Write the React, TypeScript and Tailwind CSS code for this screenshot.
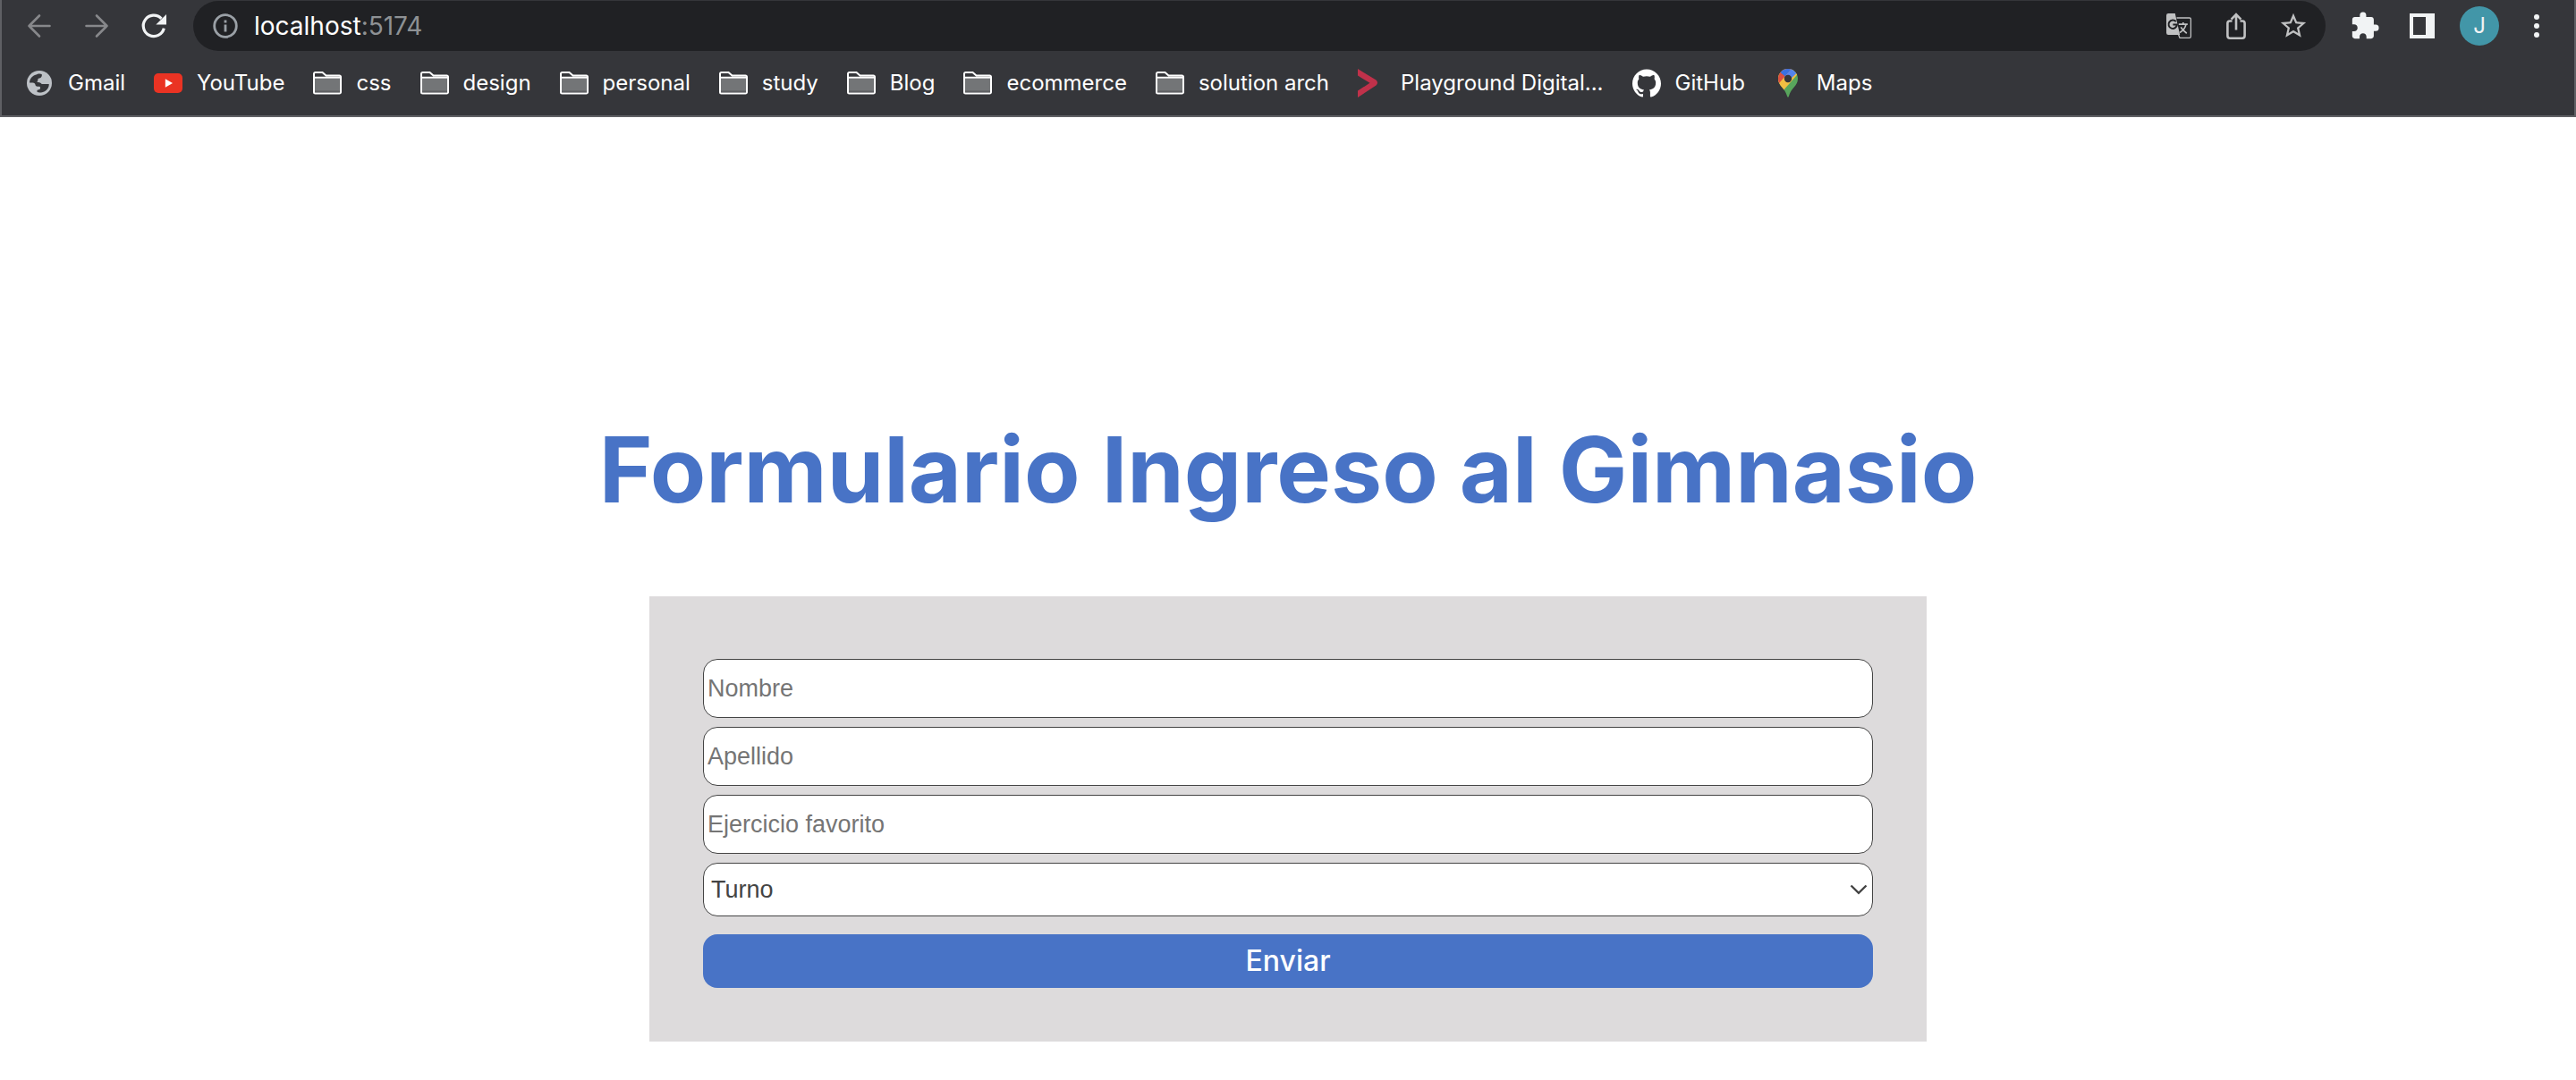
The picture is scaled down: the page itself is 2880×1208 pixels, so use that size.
import React from "react";
import { SiGithub } from "react-icons/si";
import { MdExtension, MdStarBorder } from "react-icons/md";

function ArrowIcon({ flip = false }: { flip?: boolean }) {
  return (
    <svg viewBox="0 0 32 32" className={flip ? "size-8 rotate-180" : "size-8"} fill="none" stroke="currentColor" strokeWidth="2.6" strokeLinecap="round" strokeLinejoin="round" aria-hidden="true">
      <path d="M27.500 16H4.500M16 4.500 4.500 16 16 27.500" />
    </svg>
  );
}

function ReloadIcon() {
  return (
    <svg viewBox="0 0 32 32" className="size-8" aria-hidden="true">
      <path d="M27.3 18.6A11.7 11.7 0 1 1 24.4 7.8" fill="none" stroke="currentColor" strokeWidth="3.2" />
      <path d="M30 3v11.6H18.4z" fill="currentColor" />
    </svg>
  );
}

function InfoIcon() {
  return (
    <svg viewBox="0 0 32 32" className="size-8" aria-hidden="true">
      <circle cx="16" cy="16" r="12.3" fill="none" stroke="currentColor" strokeWidth="2.8" />
      <path d="M14.6 14.6h2.8v8h-2.8zM14.6 9.6h2.8v2.8h-2.8z" fill="currentColor" />
    </svg>
  );
}

function GlobeIcon() {
  return (
    <svg viewBox="0 0 32 32" className="size-8" aria-hidden="true">
      <circle cx="16" cy="16" r="14" fill="#bdc1c6" />
      <path d="M5 15.500C5.300 11 8 8 12.500 6.600c1.500-1.300 4.500-1.500 6.200-.6.500 2-.3 3.600-1.700 4.200-1.600.3-2.600.6-2.700 1.800.3 1.300-.6 2-1 2.700 1.700.2 4.300.4 5.400 2.300h8c.2 1.800-.4 3.600-1.500 5.200-1.800 2.600-4.600 4-7.200 4.200-1.600.3-3 .2-4.200-.3-.7-1.200-.4-2.300.6-2.600 1.700 0 2.700-.7 2.600-1.900-.2-1.200.2-1.900-1-1.900-2 .1-4-.1-4.400-1.500-.2-1.700-1.200-2.700-3-2.700z" fill="#35363a" />
    </svg>
  );
}

function TranslateIcon() {
  return (
    <svg viewBox="0 0 32 32" className="size-8" aria-hidden="true">
      <path d="M4.200 2h7.600l1 4.800 4.400 19.200H4.200A2.200 2.200 0 0 1 2 23.800V4.200A2.200 2.200 0 0 1 4.200 2z" fill="currentColor" />
      <path d="M13.500 7h14.300a1.600 1.600 0 0 1 1.600 1.600v19.200a1.600 1.600 0 0 1-1.600 1.600H17l-1.500-4" fill="none" stroke="currentColor" strokeWidth="1.300" />
      <path d="M12.800 11.200a4.700 4.700 0 1 0 1.100 3.400H9.400" fill="none" stroke="#202124" strokeWidth="2" />
      <path d="M15.800 14.200h10M20.800 12v2.200M24 14.200c-.8 4-3.600 7.400-7 9.200M18.200 17.400c1.400 2.600 4 5 6.600 6.800" fill="none" stroke="currentColor" strokeWidth="1.700" />
    </svg>
  );
}

function ShareIcon() {
  return (
    <svg viewBox="0 0 32 32" className="size-8" fill="none" stroke="currentColor" strokeWidth="2.600" aria-hidden="true">
      <path d="M11.500 10.500H9A2.600 2.600 0 0 0 6.400 13.100v14A2.600 2.600 0 0 0 9 29.700h14a2.600 2.600 0 0 0 2.600-2.600v-14a2.600 2.600 0 0 0-2.600-2.600h-2.500" />
      <path d="M16 20.500V4M10.600 8.600 16 3.200l5.400 5.400" />
    </svg>
  );
}

function SidePanelIcon() {
  return (
    <svg viewBox="0 0 32 32" className="size-8" aria-hidden="true">
      <path fillRule="evenodd" d="M2 2h28v28H2zM6 6v20h14V6z" fill="currentColor" />
    </svg>
  );
}

function MenuIcon() {
  return (
    <svg viewBox="0 0 32 32" className="size-8" fill="currentColor" aria-hidden="true">
      <circle cx="16" cy="6" r="3" />
      <circle cx="16" cy="16" r="3" />
      <circle cx="16" cy="26" r="3" />
    </svg>
  );
}

function FolderIcon() {
  return (
    <svg viewBox="0 0 32 32" className="size-8" aria-hidden="true">
      <path d="M2 11h28v15H2z" fill="#737577" />
      <path d="M2 24.500h28V26H2z" fill="#5f6063" />
      <path d="M2 9.800h28M1 26V5.500A1.500 1.500 0 0 1 2.500 4h8l4 3.500h15A1.500 1.500 0 0 1 31 9v17a1.500 1.500 0 0 1-1.500 1.500h-27A1.500 1.500 0 0 1 1 26z" fill="none" stroke="#fff" strokeWidth="2" />
    </svg>
  );
}

function YouTubeIcon() {
  return (
    <svg viewBox="0 0 32 32" className="size-8" aria-hidden="true">
      <rect y="5" width="32" height="22" rx="5" fill="#ea3323" />
      <path d="M12.800 11.300v9.400l8.200-4.700z" fill="#fff" />
    </svg>
  );
}

function PlaygroundIcon() {
  return (
    <svg viewBox="0 0 32 32" className="size-8" aria-hidden="true">
      <path d="M0 0l20.500 12.600q3 2.900 0 6L0 32v-7.500L13.500 15.800 0 7.500z" fill="#c0314a" />
    </svg>
  );
}

function MapsIcon() {
  return (
    <svg viewBox="0 0 32 32" className="size-8" aria-hidden="true">
      <clipPath id="pin">
        <path d="M16 0a11 11 0 0 1 11 11c0 8.500-7.800 10.500-10 19.500q-1 2.500-2 0C12.800 21.500 5 19.500 5 11A11 11 0 0 1 16 0z" />
      </clipPath>
      <g clipPath="url(#pin)">
        <path d="M0 0h32v32H0z" fill="#58a55c" />
        <path d="M0 0h32L10.500 24.500 0 20z" fill="#f1bf42" />
        <path d="M0 0h20L4 18.500z" fill="#da5040" />
        <path d="M7.500 4 12.600 8.200 20 0H6z" fill="#3871e0" />
        <path d="M20 0 12.400 8.500 16 14l10.500-10z" fill="#5383ec" />
      </g>
      <circle cx="16" cy="11" r="4.200" fill="#35363a" />
    </svg>
  );
}

const bookmarks: { label: string; icon: React.ReactNode }[] = [
  { label: "Gmail", icon: <GlobeIcon /> },
  { label: "YouTube", icon: <YouTubeIcon /> },
  { label: "css", icon: <FolderIcon /> },
  { label: "design", icon: <FolderIcon /> },
  { label: "personal", icon: <FolderIcon /> },
  { label: "study", icon: <FolderIcon /> },
  { label: "Blog", icon: <FolderIcon /> },
  { label: "ecommerce", icon: <FolderIcon /> },
  { label: "solution arch", icon: <FolderIcon /> },
  { label: "Playground Digital...", icon: <PlaygroundIcon /> },
  { label: "GitHub", icon: <SiGithub className="size-8 text-white" /> },
  { label: "Maps", icon: <MapsIcon /> },
];

function BrowserBar() {
  return (
    <header className="border-x-2 border-b-2 border-[#5f6064] bg-[#35363a] font-[Inter,sans-serif] text-white">
      <div className="flex items-center pt-px pr-[26px] pl-[26px]">
        <div className="flex w-[188px] shrink-0 gap-8">
          <button type="button" aria-label="Atrás" className="text-[#87888b]"><ArrowIcon /></button>
          <button type="button" aria-label="Adelante" className="text-[#87888b]"><ArrowIcon flip /></button>
          <button type="button" aria-label="Recargar" className="text-[#f1f3f4]"><ReloadIcon /></button>
        </div>
        <div className="flex h-14 min-w-0 flex-1 items-center rounded-full bg-[#202124] px-5">
          <button type="button" aria-label="Información del sitio" className="text-[#9aa0a6]"><InfoIcon /></button>
          <a href="http://localhost:5174" className="ml-4 flex-1 text-[28px] leading-8">
            localhost<span className="text-[#8e9194]">:5174</span>
          </a>
          <div className="flex items-center gap-8 text-[#c0c1c2]">
            <button type="button" aria-label="Traducir"><TranslateIcon /></button>
            <button type="button" aria-label="Compartir"><ShareIcon /></button>
            <button type="button" aria-label="Favorito" className="-m-px"><MdStarBorder className="size-[34px]" /></button>
          </div>
        </div>
        <div className="ml-7 flex items-center gap-8 text-[#f1f3f4]">
          <button type="button" aria-label="Extensiones" className="-m-px"><MdExtension className="size-[34px]" /></button>
          <button type="button" aria-label="Panel lateral"><SidePanelIcon /></button>
          <button type="button" aria-label="Perfil" className="-mx-1.5 flex size-11 items-center justify-center rounded-full bg-[#4296a8] text-2xl">J</button>
          <button type="button" aria-label="Menú"><MenuIcon /></button>
        </div>
      </div>
      <nav className="flex h-[72px] items-center gap-8 pl-[26px]">
        {bookmarks.map(({ label, icon }) => (
          <a key={label} href="#" className="flex items-center gap-4 text-2xl leading-8 whitespace-nowrap">
            {icon}
            <span>{label}</span>
          </a>
        ))}
      </nav>
    </header>
  );
}

const field = "w-full rounded-2xl border border-[#444] bg-white text-[27px] text-[#444]";

export default function App() {
  return (
    <div className="min-h-screen bg-white">
      <BrowserBar />
      <main className="flex flex-col items-center px-8 pt-[332px] pb-10">
        <h1 className="text-center font-[Inter,sans-serif] text-[102px] leading-[124px] font-bold text-[#4873c6]">
          Formulario Ingreso al Gimnasio
        </h1>
        <form onSubmit={(e) => e.preventDefault()} className="mt-20 flex w-full max-w-[1428px] flex-col gap-2.5 bg-[#dddbdc] px-15 pt-[70px] pb-15 font-['Liberation_Sans',sans-serif]">
          {["Nombre", "Apellido", "Ejercicio favorito"].map((name) => (
            <input key={name} type="text" aria-label={name} placeholder={name} className={`${field} h-[66px] px-1 placeholder:text-[#757575]`} />
          ))}
          <div className="relative">
            <select aria-label="Turno" className={`${field} block h-[60px] appearance-none px-2`}>
              <option>Turno</option>
            </select>
            <svg viewBox="0 0 20 12" className="pointer-events-none absolute top-6 right-1.5 h-3 w-5" fill="none" stroke="#444" strokeWidth="2.400" aria-hidden="true">
              <path d="M1.500 1.500 10 9.800l8.500-8.300" />
            </svg>
          </div>
          <button type="submit" className="mt-2.5 h-[60px] rounded-2xl bg-[#4873c6] font-[Inter,sans-serif] text-[32px] font-medium text-white">
            Enviar
          </button>
        </form>
      </main>
    </div>
  );
}
